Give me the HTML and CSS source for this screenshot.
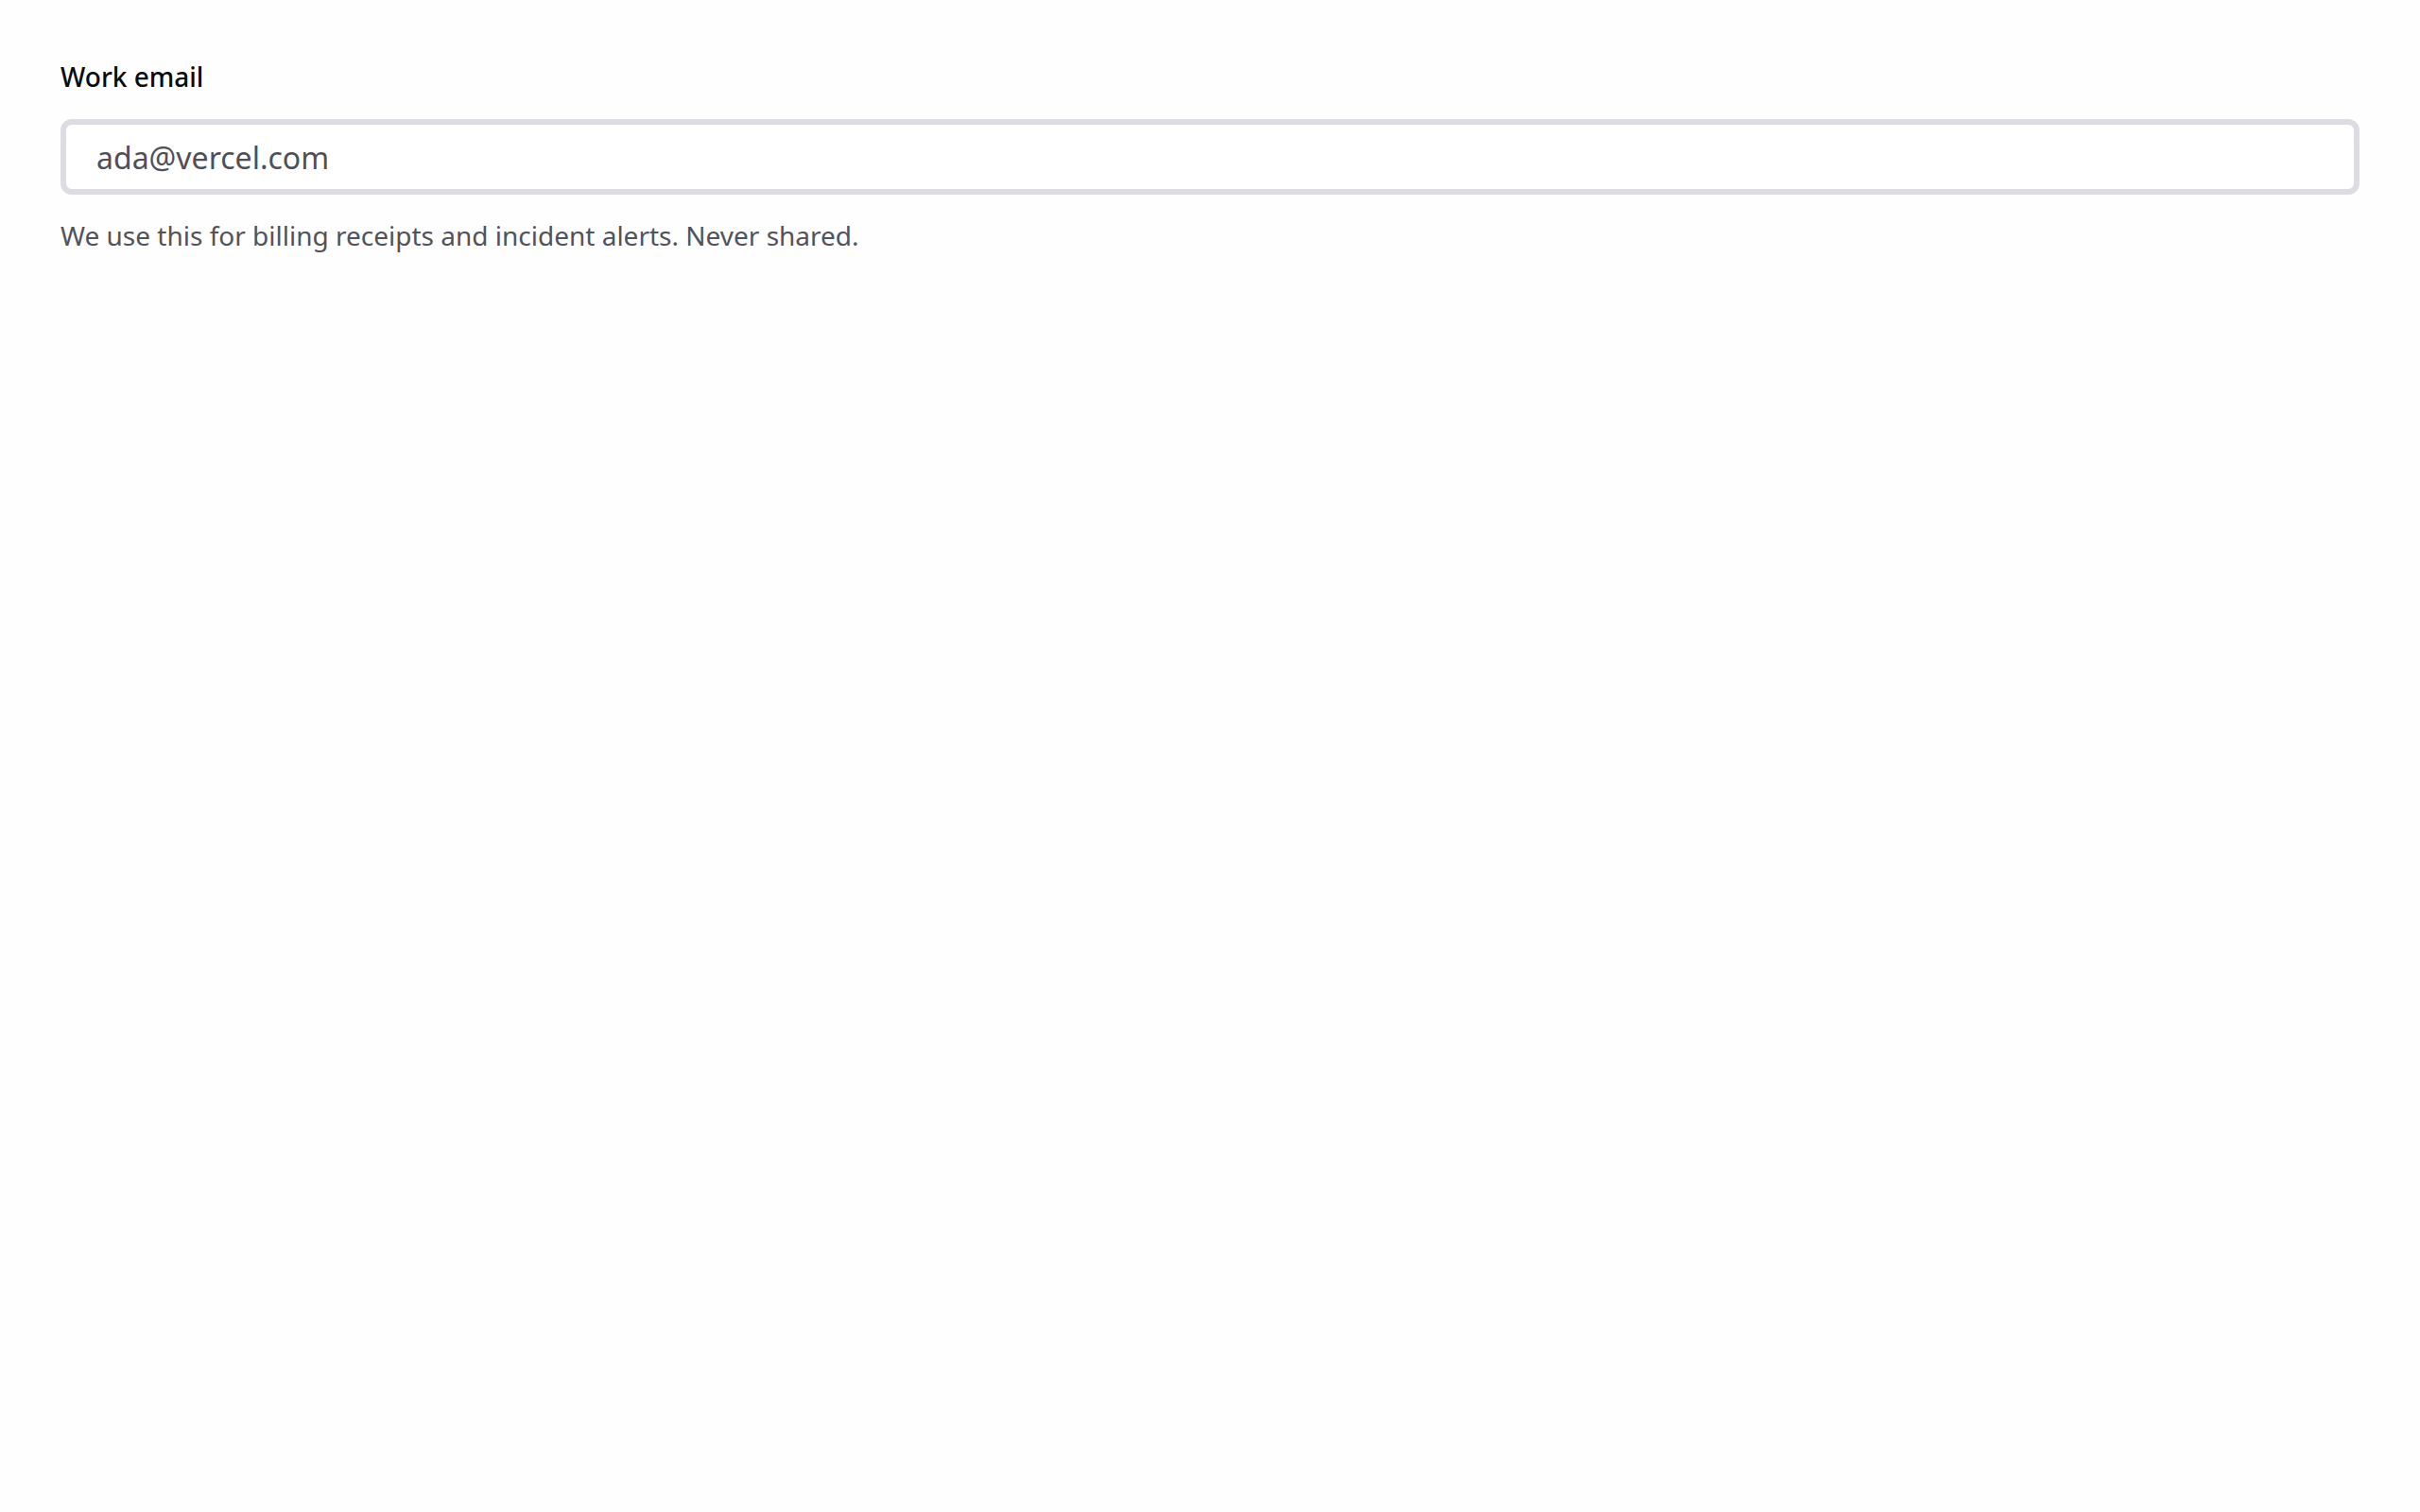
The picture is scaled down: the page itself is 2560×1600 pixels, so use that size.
FILE: index.html
```html
<!DOCTYPE html>
<html lang="en">
<head>
    <meta charset="UTF-8">
    <meta name="viewport" content="width=device-width, initial-scale=1.0">
    <title>Work email</title>
    <link rel="stylesheet" href="styles.css">
</head>
<body>
    <div class="field">
        <label class="field-label" for="workEmail">Work email</label>
        <input class="field-input" id="workEmail" type="email" value="ada@vercel.com">
        <p class="field-hint">We use this for billing receipts and incident alerts. Never shared.</p>
    </div>
</body>
</html>
```

FILE: styles.css
```css
* {
    margin: 0;
    padding: 0;
    box-sizing: border-box;
}

body {
    font-family: "Noto Sans", "Open Sans", sans-serif;
    background: #fefefe;
    color: #111;
    padding: 60px 64px;
}

.field {
    display: flex;
    flex-direction: column;
}

.field-label {
    font-size: 28px;
    line-height: 42px;
    font-weight: 500;
    color: #0b0b0f;
    margin-bottom: 24px;
}

.field-input {
    height: 80px;
    width: 100%;
    border: 6px solid #dcdce2;
    border-radius: 12px;
    background: #fff;
    padding: 0 32px;
    font-family: inherit;
    font-size: 32px;
    color: #4f4f59;
    outline: none;
}

.field-hint {
    margin-top: 22px;
    font-size: 28px;
    line-height: 42px;
    color: #52525b;
}
```
